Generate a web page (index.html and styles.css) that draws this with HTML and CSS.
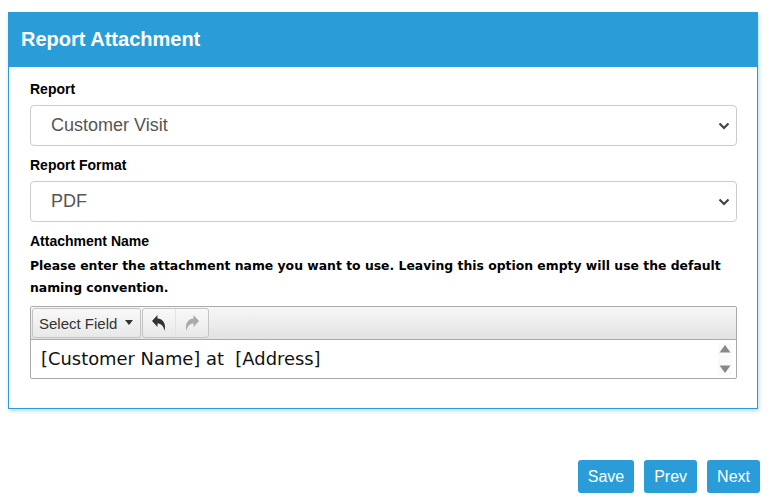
FILE: index.html
```html
<!DOCTYPE html>
<html>
<head>
<meta charset="utf-8">
<link rel="stylesheet" href="styles.css">
</head>
<body>
<div class="panel">
  <div class="panel-head">Report Attachment</div>
  <div class="panel-body">
    <label class="lbl">Report</label>
    <div class="select"><span>Customer Visit</span>
      <svg class="chev" viewBox="0 0 12 8" width="12" height="8"><path d="M1.5 1.5 L6 6 L10.5 1.5" fill="none" stroke="#444" stroke-width="2.2"/></svg>
    </div>
    <label class="lbl">Report Format</label>
    <div class="select"><span>PDF</span>
      <svg class="chev" viewBox="0 0 12 8" width="12" height="8"><path d="M1.5 1.5 L6 6 L10.5 1.5" fill="none" stroke="#444" stroke-width="2.2"/></svg>
    </div>
    <label class="lbl">Attachment Name</label>
    <p class="desc">Please enter the attachment name you want to use. Leaving this option empty will use the default naming convention.</p>
    <div class="editor">
      <div class="toolbar">
        <div class="tgroup">
          <div class="tbtn field">Select Field <span class="caret"></span></div>
        </div>
        <div class="tgroup">
          <div class="tbtn icon"><svg viewBox="0 0 16 18" width="16" height="18"><path d="M6.5 1 L1 7 L6.5 13 V9.5 C10 9.5 12.5 11.5 13.5 17 C15.5 10 12 5 6.5 4.6 Z" fill="#333"/></svg></div>
          <div class="tbtn icon"><svg viewBox="0 0 16 18" width="16" height="18"><path d="M9.5 1 L15 7 L9.5 13 V9.5 C6 9.5 3.5 11.5 2.5 17 C0.5 10 4 5 9.5 4.6 Z" fill="#aaa"/></svg></div>
        </div>
      </div>
      <div class="textarea">
        <span class="val">[Customer Name] at &nbsp;[Address]</span>
        <div class="spin">
          <svg viewBox="0 0 12 9" width="12" height="9"><path d="M0.5 8.5 L6 1 L11.5 8.5 Z" fill="#888"/></svg>
          <svg viewBox="0 0 12 9" width="12" height="9"><path d="M0.5 0.5 L6 8 L11.5 0.5 Z" fill="#888"/></svg>
        </div>
      </div>
    </div>
  </div>
</div>
<div class="actions">
  <button class="btn">Save</button>
  <button class="btn">Prev</button>
  <button class="btn">Next</button>
</div>
</body>
</html>
```

FILE: styles.css
```css
html, body { margin: 0; padding: 0; background: #fff; }
body {
  font-family: "Liberation Sans", Arial, sans-serif;
  color: #000;
  padding: 12px 0 0 8px;
}
.panel {
  width: 748px;
  border: 1px solid #2a9dd8;
  box-shadow: 1px 2px 4px rgba(42, 157, 216, 0.35);
  background: #fff;
}
.panel-head {
  background: #2a9dd8;
  color: #fff;
  font-weight: bold;
  font-size: 20px;
  height: 55px;
  line-height: 55px;
  padding-left: 13px;
  margin: -1px -1px 0 -1px;
}
.panel-body {
  padding: 14px 20px 29px 21px;
  display: flex;
  flex-direction: column;
}
.lbl {
  font-weight: bold;
  font-size: 14px;
  line-height: 16px;
  margin-bottom: 8px;
}
.select {
  height: 39px;
  border: 1px solid #ccc;
  border-radius: 4px;
  display: flex;
  align-items: center;
  justify-content: space-between;
  padding: 0 6px 0 20px;
  font-size: 18px;
  color: #555;
  margin-bottom: 11px;
}
.desc {
  margin: -2px 0 7px 0;
  font-family: "DejaVu Sans", Verdana, sans-serif;
  font-weight: bold;
  font-size: 12.4px;
  line-height: 22px;
}
.editor {
  border: 1px solid #aaa;
  border-radius: 2px;
}
.toolbar {
  height: 32px;
  background: linear-gradient(#f7f7f7, #e2e2e2);
  border-bottom: 1px solid #aaa;
  display: flex;
  align-items: center;
  padding-left: 1px;
  gap: 1px;
}
.tgroup {
  display: flex;
  height: 28px;
  border: 1px solid #c4c4c4;
  border-radius: 3px;
  background: linear-gradient(#f9f9f9, #e8e8e8);
}
.tbtn {
  display: flex;
  align-items: center;
  justify-content: center;
  height: 28px;
}
.field {
  font-size: 15px;
  color: #333;
  padding: 0 7px 0 6px;
  gap: 8px;
}
.caret {
  width: 0; height: 0;
  border-left: 4.5px solid transparent;
  border-right: 4.5px solid transparent;
  border-top: 5px solid #333;
  margin-bottom: 2px;
}
.icon { width: 32px; }
.icon + .icon { border-left: 1px solid #e4e4e4; }
.textarea {
  height: 38px;
  display: flex;
  align-items: center;
  justify-content: space-between;
  padding: 0 4px 0 10px;
}
.val {
  font-family: "DejaVu Sans", Verdana, sans-serif;
  font-size: 17.9px;
  color: #111;
  margin-top: -2px;
}
.spin {
  display: flex;
  flex-direction: column;
  gap: 12px;
  background: #fafafa;
  padding: 1px 1px;
}
.actions {
  display: flex;
  justify-content: flex-end;
  gap: 10px;
  width: 752px;
  margin-top: 51px;
}
.btn {
  background: #2a9dd8;
  color: #fff;
  border: none;
  border-radius: 3px;
  font-family: "Liberation Sans", Arial, sans-serif;
  font-size: 16px;
  height: 33px;
  padding: 0 10px;
}
```
